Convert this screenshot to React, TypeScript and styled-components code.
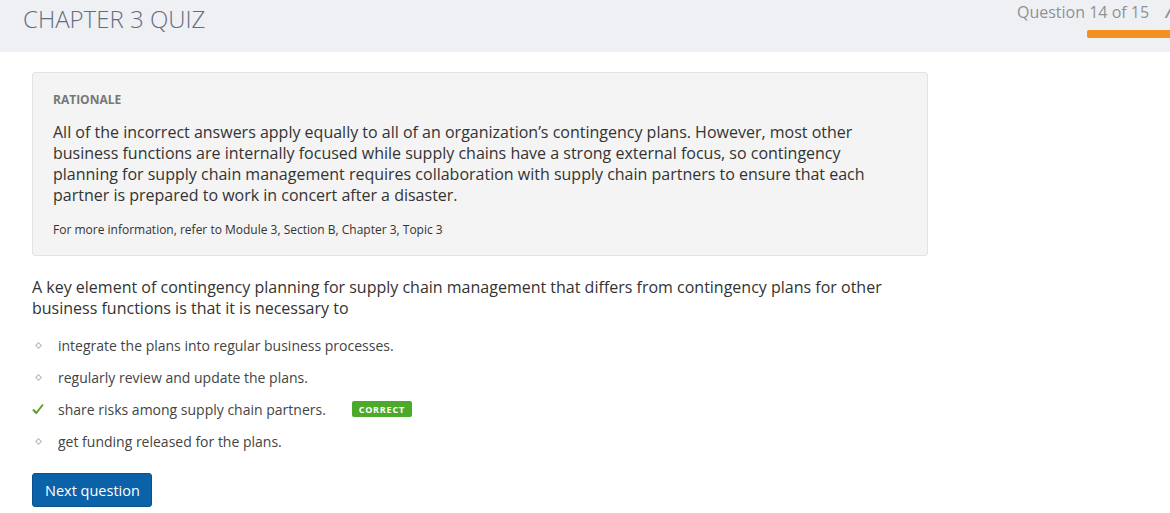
import React from 'react';
import styled, { createGlobalStyle } from 'styled-components';

const GlobalStyle = createGlobalStyle`
    html, body {
        margin: 0;
        padding: 0;
        background: #ffffff;
        overflow: hidden;
    }
    body {
        font-family: "Open Sans", "Liberation Sans", sans-serif;
        color: #333333;
    }
`;

const options = [
    { text: 'integrate the plans into regular business processes.', correct: false },
    { text: 'regularly review and update the plans.', correct: false },
    { text: 'share risks among supply chain partners.', correct: true },
    { text: 'get funding released for the plans.', correct: false },
];

export default function App() {
    return (
        <Page>
            <GlobalStyle />
            <Header>
                <Title>CHAPTER 3 QUIZ</Title>
                <Progress>
                    <ProgressRow>
                        <Counter>Question 14 of 15</Counter>
                        <Clipped>/</Clipped>
                    </ProgressRow>
                    <Bar />
                </Progress>
            </Header>
            <Content>
                <Rationale>
                    <Label>RATIONALE</Label>
                    <Body>
                        All of the incorrect answers apply equally to all of an organization’s contingency plans. However, most other
                        business functions are internally focused while supply chains have a strong external focus, so contingency
                        planning for supply chain management requires collaboration with supply chain partners to ensure that each
                        partner is prepared to work in concert after a disaster.
                    </Body>
                    <Reference>For more information, refer to Module 3, Section B, Chapter 3, Topic 3</Reference>
                </Rationale>
                <Question>
                    A key element of contingency planning for supply chain management that differs from contingency plans for other
                    business functions is that it is necessary to
                </Question>
                <Options>
                    {options.map((item) => (
                        <Option key={item.text}>
                            <Marker>
                                {item.correct ? (
                                    <svg width="12" height="12" viewBox="0 0 12 12">
                                        <path d="M1 6.5 L4.3 10 L11 1.5" fill="none" stroke="#5b9f2e" strokeWidth="2" strokeLinejoin="round" />
                                    </svg>
                                ) : (
                                    <Diamond />
                                )}
                            </Marker>
                            <OptionText>{item.text}</OptionText>
                            {item.correct && <Badge>CORRECT</Badge>}
                        </Option>
                    ))}
                </Options>
                <NextButton>Next question</NextButton>
            </Content>
        </Page>
    );
}

const Page = styled.div`
    width: 1170px;
    min-height: 513px;
    overflow: hidden;
`;

const Header = styled.div`
    display: flex;
    align-items: flex-start;
    justify-content: space-between;
    width: 1240px;
    height: 52px;
    box-sizing: border-box;
    padding: 0 23px;
    background: #eff0f4;
`;

const Title = styled.h1`
    margin: 0;
    padding-top: 4px;
    font-size: 24px;
    font-weight: 300;
    line-height: 29px;
    color: #5f6e7e;
    letter-spacing: 0;
`;

const Progress = styled.div`
    display: flex;
    flex-direction: column;
    width: 200px;
`;

const ProgressRow = styled.div`
    display: flex;
    align-items: center;
    gap: 16px;
    height: 24px;
`;

const Counter = styled.span`
    font-size: 16px;
    font-weight: 400;
    color: #8d9298;
`;

const Clipped = styled.span`
    font-size: 14px;
    font-style: italic;
    font-weight: 700;
    color: #8d9298;
`;

const Bar = styled.div`
    margin: 6px 0 0 70px;
    width: 130px;
    height: 8px;
    border-radius: 2px;
    background: #f39020;
`;

const Content = styled.div`
    padding: 20px 0 0 32px;
    width: 896px;
`;

const Rationale = styled.div`
    box-sizing: border-box;
    width: 896px;
    padding: 19px 20px 17px;
    background: #f4f4f4;
    border: 1px solid #e3e3e3;
    border-radius: 3px;
`;

const Label = styled.div`
    font-size: 12px;
    font-weight: 700;
    line-height: 16px;
    color: #777777;
`;

const Body = styled.p`
    margin: 14px 0 0;
    font-size: 16px;
    line-height: 21px;
    color: #333333;
`;

const Reference = styled.div`
    margin-top: 16px;
    font-size: 12px;
    line-height: 16px;
    color: #333333;
`;

const Question = styled.p`
    margin: 21px 0 0;
    font-size: 16px;
    line-height: 21px;
    color: #333333;
`;

const Options = styled.ul`
    list-style: none;
    margin: 10px 0 0;
    padding: 0;
`;

const Option = styled.li`
    display: flex;
    align-items: center;
    height: 32px;
`;

const Marker = styled.span`
    display: flex;
    align-items: center;
    justify-content: center;
    width: 12px;
    margin-right: 14px;
`;

const Diamond = styled.span`
    display: block;
    width: 3px;
    height: 3px;
    border: 1px solid #b8b8b8;
    transform: rotate(45deg);
`;

const OptionText = styled.span`
    font-size: 14px;
    color: #444444;
`;

const Badge = styled.span`
    margin-left: 26px;
    width: 60px;
    height: 16px;
    display: inline-flex;
    align-items: center;
    justify-content: center;
    border-radius: 2px;
    background: #4caa2a;
    color: #ffffff;
    font-size: 9px;
    font-weight: 700;
    letter-spacing: 0.8px;
`;

const NextButton = styled.button`
    margin-top: 16px;
    height: 34px;
    padding: 0 11px 0 12px;
    background: #0b62a8;
    border: 1px solid #08528e;
    border-radius: 3px;
    color: #ffffff;
    font-family: "Open Sans", "Liberation Sans", sans-serif;
    font-size: 14.5px;
    cursor: pointer;
`;
